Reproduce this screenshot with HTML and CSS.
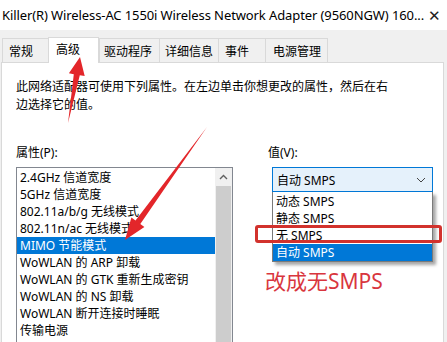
FILE: index.html
```html
<!DOCTYPE html>
<html lang="zh-CN">
<head>
<meta charset="utf-8">
<title>Adapter properties</title>
<link rel="stylesheet" href="styles.css">
</head>
<body>
<div class="window">
  <div class="titlebar">
    <span class="title">Killer(R) Wireless-AC 1550i Wireless Network Adapter (9560NGW) 160...</span>
    <span class="close">✕</span>
  </div>
  <div class="tabs">
    <div class="tab t1">常规</div>
    <div class="tab t2 active">高级</div>
    <div class="tab t3">驱动程序</div>
    <div class="tab t4">详细信息</div>
    <div class="tab t5">事件</div>
    <div class="tab t6">电源管理</div>
  </div>
  <div class="panel">
    <p class="desc">此网络适配器可使用下列属性。在左边单击你想更改的属性，然后在右<br>边选择它的值。</p>
    <div class="cols">
      <div class="col-left">
        <div class="label">属性(P):</div>
        <div class="listbox">
          <ul class="items">
            <li>2.4GHz 信道宽度</li>
            <li>5GHz 信道宽度</li>
            <li>802.11a/b/g 无线模式</li>
            <li>802.11n/ac 无线模式</li>
            <li class="sel">MIMO 节能模式</li>
            <li>WoWLAN 的 ARP 卸载</li>
            <li>WoWLAN 的 GTK 重新生成密钥</li>
            <li>WoWLAN 的 NS 卸载</li>
            <li>WoWLAN 断开连接时睡眠</li>
            <li>传输电源</li>
          </ul>
          <div class="scrollbar">
            <div class="sb-up"><svg width="9" height="6" viewBox="0 0 9 6"><path d="M1 5 L4.5 1.5 L8 5" fill="none" stroke="#606060" stroke-width="1.4"/></svg></div>
            <div class="sb-thumb"></div>
          </div>
        </div>
      </div>
      <div class="col-right">
        <div class="label">值(V):</div>
        <div class="combo-wrap">
          <div class="combo">
            <span>自动 SMPS</span>
            <svg width="10" height="6" viewBox="0 0 10 6"><path d="M1 1 L5 5 L9 1" fill="none" stroke="#444" stroke-width="1"/></svg>
          </div>
          <ul class="popup">
            <li>动态 SMPS</li>
            <li>静态 SMPS</li>
            <li>无 SMPS</li>
            <li class="sel">自动 SMPS</li>
          </ul>
        </div>
        <div class="note">改成无SMPS</div>
      </div>
    </div>
  </div>
  <div class="redbox"></div>
  <svg class="arrows" width="447" height="342" viewBox="0 0 447 342">
    <polygon points="68,123 79.8,75.2 84.7,76.1 80,57 68.9,73.3 73.8,74.2" fill="#e3262a"/>
    <polygon points="207,127 140.3,224 144.4,226.9 125,240 131.4,217.5 135.5,220.4" fill="#e3262a"/>
  </svg>
</div>
</body>
</html>
```

FILE: styles.css
```css
* { box-sizing: border-box; }
html, body { margin: 0; padding: 0; }
body {
  width: 447px;
  height: 342px;
  overflow: hidden;
  background: #f0f0f0;
  font-family: "Noto Sans", "Noto Sans CJK SC", sans-serif;
  font-size: 12px;
  color: #000;
}
.window { position: relative; width: 447px; height: 342px; overflow: hidden; }
.titlebar {
  height: 30px;
  background: #fff;
  display: flex;
  align-items: center;
  justify-content: space-between;
  padding: 0 6px 0 2px;
}
.title { font-size: 13px; white-space: nowrap; letter-spacing: -0.1px; }
.close { font-size: 15px; color: #222; }
.tabs {
  height: 32px;
  display: flex;
  align-items: flex-end;
  padding-left: 2px;
}
.tab {
  height: 24px;
  display: flex;
  align-items: center;
  border-left: 1px solid #d9d9d9;
  border-top: 1px solid #d9d9d9;
  background: #f0f0f0;
  white-space: nowrap;
}
.t1 { width: 46px; padding-left: 6px; border-left: 1px solid #d9d9d9; }
.t2 { width: 51px; padding-left: 7px; }
.t3 { width: 60px; padding-left: 4px; }
.t4 { width: 59px; padding-left: 5px; }
.t5 { width: 47px; padding-left: 6px; }
.t6 { width: 63px; padding-left: 7px; border-right: 1px solid #d9d9d9; }
.tab.active {
  height: 26px;
  background: #fff;
  margin-bottom: -1px;
  position: relative;
  z-index: 1;
  border-right: 1px solid #d9d9d9;
  padding-bottom: 4px;
}
.panel {
  background: #fff;
  border: 1px solid #d9d9d9;
  margin: 0 3px 0 1px;
  height: 290px;
  padding: 15px 0 0 14px;
}
.desc { margin: 0; line-height: 18px; }
.cols {
  display: grid;
  grid-template-columns: 217px 165px;
  column-gap: 35px;
  margin-top: 31px;
}
.label { line-height: 16px; height: 16px; }
.listbox {
  margin-top: 6px;
  border: 1px solid #828790;
  display: flex;
  height: 190px;
  border-bottom: none;
}
.items {
  list-style: none;
  margin: 0;
  padding: 1px 0 0;
  flex: 1;
}
.items li { height: 17px; line-height: 17px; padding-left: 3px; white-space: nowrap; }
.items li.sel { background: #0078d7; color: #fff; }
.scrollbar {
  width: 17px;
  background: #f0f0f0;
  display: flex;
  flex-direction: column;
}
.sb-up { height: 18px; display: flex; align-items: center; justify-content: center; }
.sb-thumb { flex: 1; background: #cdcdcd; margin: 0 1px; }
.combo-wrap { position: relative; margin-top: 6px; margin-left: 4px; }
.combo {
  height: 25px;
  width: 161px;
  background: #e5f1fb;
  border: 1px solid #0078d7;
  display: flex;
  align-items: center;
  justify-content: space-between;
  padding: 0 6px 0 4px;
}
.popup {
  position: absolute;
  left: 0;
  top: 25px;
  width: 161px;
  margin: 0;
  padding: 1px 0 0;
  list-style: none;
  background: #fff;
  border: 1px solid #7a7a7a;
  border-top: none;
  box-shadow: 3px 3px 3px rgba(0,0,0,0.35);
  z-index: 2;
}
.popup li { height: 17px; line-height: 17px; padding-left: 3px; }
.popup li.sel { background: #0078d7; color: #fff; }
.note {
  margin-top: 77px;
  margin-left: -3px;
  font-size: 21px;
  color: #d9363e;
  line-height: 24px;
}
.redbox {
  position: absolute;
  left: 255px;
  top: 225px;
  width: 187px;
  height: 18px;
  border: 3px solid #d2322d;
  border-radius: 3px;
  z-index: 3;
}
.arrows { position: absolute; left: 0; top: 0; z-index: 4; pointer-events: none; }
```
